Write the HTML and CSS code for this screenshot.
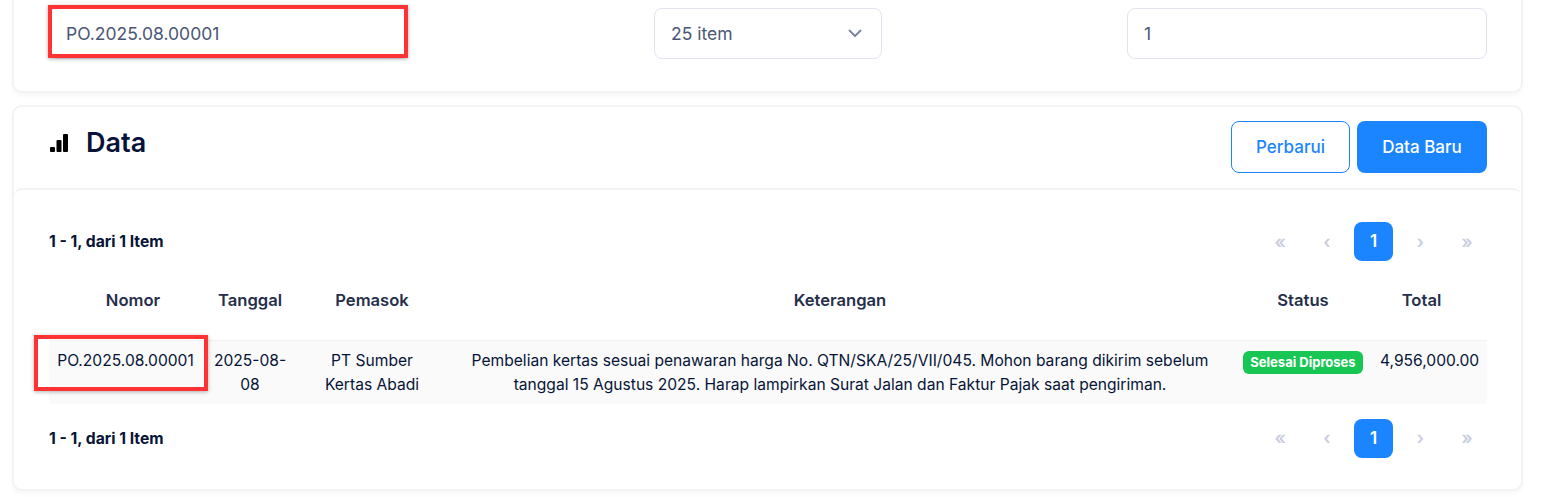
FILE: index.html
```html
<!DOCTYPE html>
<html lang="id">
<head>
<meta charset="utf-8">
<title>Data</title>
<link rel="stylesheet" href="styles.css">
</head>
<body>
<main class="page">
  <section class="card filter-card">
    <div class="filter-row">
      <div class="marked filter-first">
        <input class="field" type="text" value="PO.2025.08.00001">
        <span class="mark mark-input"></span>
      </div>
      <div class="field select-field">
        <span>25 item</span>
        <svg class="chevron" viewBox="0 0 14 9" width="14" height="9"><path d="M1.5 1.5 7 7l5.5-5.5" fill="none" stroke="#78829d" stroke-width="1.8" stroke-linecap="round" stroke-linejoin="round"/></svg>
      </div>
      <div class="filter-last">
        <input class="field" type="text" value="1">
      </div>
    </div>
  </section>

  <section class="card data-card">
    <header class="data-head">
      <h2 class="title">
        <svg class="title-icon" viewBox="0 0 18 18" width="18" height="18"><rect x="0" y="13" width="5" height="5" rx="1"/><rect x="6.5" y="6" width="5" height="12" rx="1"/><rect x="13" y="0" width="5" height="18" rx="1"/></svg>
        <span>Data</span>
      </h2>
      <div class="actions">
        <button class="btn btn-outline">Perbarui</button>
        <button class="btn btn-solid">Data Baru</button>
      </div>
    </header>
    <div class="data-body">
      <div class="pager-row">
        <span class="info">1 - 1, dari 1 Item</span>
        <nav class="pager">
          <span class="pg">«</span><span class="pg">‹</span><span class="pg pg-on">1</span><span class="pg">›</span><span class="pg">»</span>
        </nav>
      </div>
      <table class="grid">
        <colgroup>
          <col class="c1"><col class="c2"><col class="c3"><col class="c4"><col class="c5"><col class="c6">
        </colgroup>
        <thead>
          <tr>
            <th class="th-first">Nomor</th>
            <th>Tanggal</th>
            <th>Pemasok</th>
            <th>Keterangan</th>
            <th>Status</th>
            <th class="th-last">Total</th>
          </tr>
        </thead>
        <tbody>
          <tr>
            <td class="marked">PO.2025.08.00001<span class="mark mark-cell"></span></td>
            <td>2025-08-08</td>
            <td>PT Sumber Kertas Abadi</td>
            <td>Pembelian kertas sesuai penawaran harga No. QTN/SKA/25/VII/045. Mohon barang dikirim sebelum tanggal 15 Agustus 2025. Harap lampirkan Surat Jalan dan Faktur Pajak saat pengiriman.</td>
            <td><span class="badge">Selesai Diproses</span></td>
            <td>4,956,000.00</td>
          </tr>
        </tbody>
      </table>
      <div class="pager-row pager-bottom">
        <span class="info">1 - 1, dari 1 Item</span>
        <nav class="pager">
          <span class="pg">«</span><span class="pg">‹</span><span class="pg pg-on">1</span><span class="pg">›</span><span class="pg">»</span>
        </nav>
      </div>
    </div>
  </section>
</main>
</body>
</html>
```
FILE: styles.css
```css
* { box-sizing: border-box; }
html, body { margin: 0; height: 100%; overflow: hidden; background: #fff; }
body { font-family: Inter, "Liberation Sans", sans-serif; color: #071437; }
.page { padding: 0 22px 0 12px; display: flex; flex-direction: column; gap: 12px; }

.card {
  background: #fff;
  border: 2px solid #f3f3f5;
  border-radius: 10px;
  box-shadow: 0 3px 4px rgba(0, 0, 0, 0.03);
}
.filter-card { border-top: 0; border-top-left-radius: 0; border-top-right-radius: 0; height: 93px; padding: 8px 34px 0 35px; }
.filter-row { display: flex; justify-content: space-between; }
.filter-first { flex: none; width: 358px; }
.filter-last { flex: none; width: 360px; }
.marked { position: relative; }

.field {
  display: block;
  height: 51px;
  width: 100%;
  padding: 0 16px;
  border: 1px solid #e1e3f1;
  border-radius: 8px;
  background: #fff;
  font: 400 17.5px Inter, sans-serif;
  color: #4b5675;
  outline: 0;
}
.select-field { flex: none; width: 228px; margin-left: 2px; display: flex; align-items: center; justify-content: space-between; padding-right: 19px; }
.chevron { display: block; }

.mark { position: absolute; border: 4px solid #ff3333; box-shadow: 0 1px 4px rgba(0, 0, 0, 0.3); pointer-events: none; }
.mark-input { left: -1px; right: -1px; top: -3px; bottom: 1px; }
.mark-cell { left: -15px; width: 174px; top: -6px; height: 56px; }

.data-card { height: 386px; }
.data-head { height: 81px; display: flex; justify-content: space-between; padding: 14px 34px 0 35px; }
.title { margin: 0; display: flex; align-items: center; gap: 18px; height: 42px; padding-left: 1px; font-size: 27px; font-weight: 600; letter-spacing: 0; color: #071437; }
.title-icon { display: block; fill: #000; margin-top: 2px; }
.actions { display: flex; gap: 7px; }
.btn { height: 52px; border-radius: 8px; font: 500 17px Inter, sans-serif; cursor: pointer; }
.btn-outline { width: 119px; background: #fff; color: #1b84ff; border: 1px solid #1b84ff; }
.btn-solid { width: 130px; background: #1b84ff; color: #fff; border: 0; }

.data-body { margin: 0; padding: 32px 34px 0 35px; border-top: 2px solid #f3f3f5; border-radius: 8px 8px 0 0; }
.pager-row { display: flex; justify-content: space-between; align-items: center; height: 39px; }
.info { font-size: 15.7px; font-weight: 700; color: #071437; word-spacing: 0; }
.pager { display: flex; gap: 7.7px; margin-right: 0.5px; }
.pg { width: 39px; height: 39px; padding-bottom: 1px; display: flex; align-items: center; justify-content: center; font-size: 18px; font-weight: 600; color: #c9cede; border-radius: 8px; }
.pg-on { background: #1b84ff; color: #fff; font-size: 17px; }

.grid { width: 100%; table-layout: fixed; border-collapse: collapse; }
.c1 { width: 153px; } .c2 { width: 96px; } .c3 { width: 148px; } .c4 { width: 788px; } .c5 { width: 138px; } .c6 { width: 115px; }
.grid th { height: 79px; padding: 0 8px; text-align: center; font-size: 16.6px; font-weight: 600; color: #252f4a; }
.grid .th-first { padding-left: 23px; }
.grid .th-last { padding-right: 24px; }
.grid td { padding: 8px 8px 7px; vertical-align: top; text-align: center; font-size: 15.6px; line-height: 24px; color: #071437; background: #fafafa; border-top: 1px solid #f1f1f4; }
.badge { display: inline-block; height: 23px; line-height: 23px; padding: 0 7.5px; border-radius: 6px; background: #17c653; color: #fff; font-size: 13px; font-weight: 700; vertical-align: top; margin-top: 2px; white-space: nowrap; }
.pager-bottom { margin-top: 15px; }
```
